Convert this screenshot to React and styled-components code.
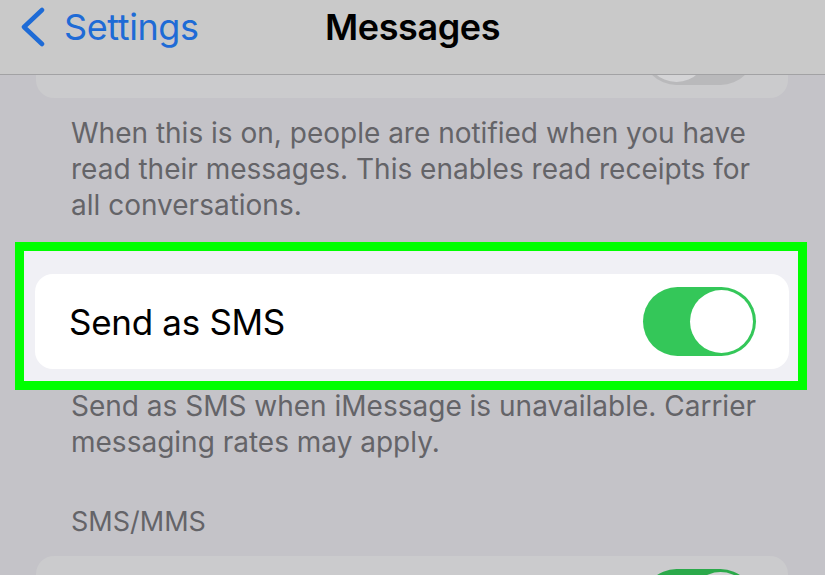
import React from 'react';
import styled, { createGlobalStyle } from 'styled-components';

const GlobalStyle = createGlobalStyle`
  html, body {
    margin: 0;
    padding: 0;
    background: #c4c3c8;
  }
  body {
    font-family: Inter, "Noto Sans", "Liberation Sans", sans-serif;
    -webkit-font-smoothing: antialiased;
  }
`;

const Screen = styled.div`
  position: relative;
  width: 825px;
  height: 575px;
  overflow: hidden;
  background: #c4c3c8;
`;

const NavBar = styled.div`
  position: absolute;
  top: 0;
  left: 0;
  right: 0;
  height: 74px;
  display: grid;
  grid-template-columns: 1fr auto 1fr;
  align-items: start;
  background: #c9c9c9;
  border-bottom: 1px solid #a2a2a4;
  z-index: 2;
`;

const BackButton = styled.div`
  display: flex;
  align-items: center;
  gap: 18px;
  padding-left: 20px;
  height: 54px;
  color: #1e6bd6;
  font-size: 36px;
  letter-spacing: -0.4px;
`;

const Title = styled.div`
  height: 54px;
  display: flex;
  align-items: center;
  color: #000;
  font-size: 36px;
  font-weight: 600;
  letter-spacing: -0.4px;
`;

const Content = styled.div`
  display: flex;
  flex-direction: column;
  padding-top: 3px;
`;

const Card = styled.div`
  margin: ${p => p.$top || 0}px 37px 0 36px;
  height: 95px;
  flex-shrink: 0;
  display: flex;
  align-items: center;
  justify-content: space-between;
  padding: 0 33px 0 34px;
  border-radius: 18px;
  background: ${p => (p.$dim ? '#cbcbcd' : '#ffffff')};
`;

const RowLabel = styled.div`
  font-size: 35px;
  color: #000;
  letter-spacing: -0.3px;
`;

const Footer = styled.div`
  padding-left: 71px;
  margin-top: ${p => p.$top}px;
  font-size: 28px;
  line-height: 36px;
  color: #646468;
  white-space: nowrap;
`;

const Highlight = styled.div`
  margin: 19px 18px 0 15px;
  border: 9px solid #00ff00;
  background: #f0f0f5;
  padding: 23px 0 12px 0;

  ${Card} {
    margin: 0 9px 0 11px;
  }
`;

const SectionHeader = styled.div`
  padding-left: 71px;
  margin-top: 47px;
  font-size: 27px;
  line-height: 30px;
  color: #646468;
`;

const Track = styled.div`
  position: relative;
  width: 113px;
  height: 69px;
  border-radius: 35px;
  background: ${p => p.$color};
  flex-shrink: 0;
`;

const Knob = styled.div`
  position: absolute;
  top: 3px;
  left: ${p => (p.$on ? '47px' : '3px')};
  width: 63px;
  height: 63px;
  border-radius: 50%;
  background: ${p => p.$color};
`;

const Toggle = ({ on, dim }) => {
  let track = on ? '#34c759' : '#e9e9eb';
  let knob = '#ffffff';
  if (dim) {
    track = on ? '#2ba94a' : '#b9b9bb';
    knob = '#d4d4d6';
  }
  return (
    <Track $color={track}>
      <Knob $on={on} $color={knob} />
    </Track>
  );
};

const Chevron = () => (
  <svg width="26" height="40" viewBox="0 0 26 40">
    <path
      d="M22 3 L4 20 L22 37"
      fill="none"
      stroke="#1e6bd6"
      strokeWidth="4.5"
      strokeLinecap="round"
      strokeLinejoin="round"
    />
  </svg>
);

export default function App() {
  return (
    <Screen>
      <GlobalStyle />
      <NavBar>
        <BackButton>
          <Chevron />
          Settings
        </BackButton>
        <Title>Messages</Title>
        <div />
      </NavBar>

      <Content>
        {/* row scrolled up under the nav bar, only its switch shows */}
        <Card $dim>
          <div />
          <Toggle dim />
        </Card>
        <Footer $top={17}>
          When this is on, people are notified when you have<br />
          read their messages. This enables read receipts for<br />
          all conversations.
        </Footer>

        <Highlight>
          <Card>
            <RowLabel>Send as SMS</RowLabel>
            <Toggle on />
          </Card>
        </Highlight>
        <Footer $top={-2}>
          Send as SMS when iMessage is unavailable. Carrier<br />
          messaging rates may apply.
        </Footer>

        <SectionHeader>SMS/MMS</SectionHeader>
        <Card $dim $top={19}>
          <div />
          <Toggle on dim />
        </Card>
      </Content>
    </Screen>
  );
}
